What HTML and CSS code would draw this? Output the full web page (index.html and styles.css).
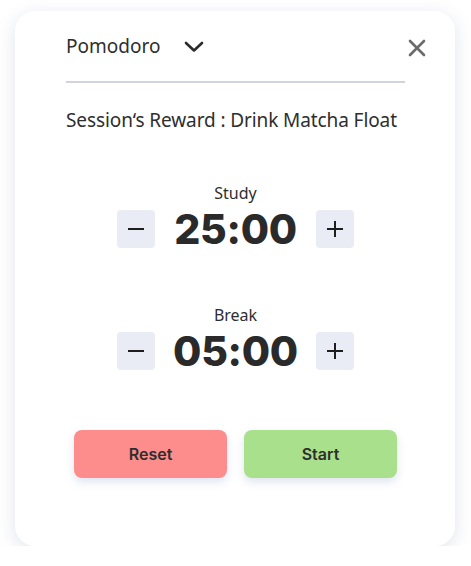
FILE: index.html
```html
<!DOCTYPE html>
<html>
<head>
<meta charset="utf-8">
<link rel="stylesheet" href="styles.css">
</head>
<body>
<div class="card">
  <div class="header">
    <span class="title">Pomodoro</span>
    <svg class="chev" width="20" height="12" viewBox="0 0 20 12"><path d="M2 2 L10 9.5 L18 2" fill="none" stroke="#2b2b2b" stroke-width="2.6" stroke-linecap="round" stroke-linejoin="round"/></svg>
  </div>
  <svg class="close" width="20" height="20" viewBox="0 0 20 20"><path d="M3 3 L17 17 M17 3 L3 17" fill="none" stroke="#6a6a6a" stroke-width="2.6" stroke-linecap="round"/></svg>
  <div class="divider"></div>
  <p class="reward">Session‘s Reward : Drink Matcha Float</p>

  <div class="timer first">
    <div class="label">Study</div>
    <div class="row">
      <div class="step"><span class="minus"></span></div>
      <div class="time">25:00</div>
      <div class="step"><span class="plus"></span></div>
    </div>
  </div>

  <div class="timer">
    <div class="label">Break</div>
    <div class="row">
      <div class="step"><span class="minus"></span></div>
      <div class="time">05:00</div>
      <div class="step"><span class="plus"></span></div>
    </div>
  </div>

  <div class="actions">
    <button class="btn reset">Reset</button>
    <button class="btn start">Start</button>
  </div>
</div>
</body>
</html>
```
FILE: styles.css
```css
* { box-sizing: border-box; }
body {
  margin: 0;
  background: #fff;
  font-family: "Noto Sans", sans-serif;
  color: #2e2e2e;
}
.card {
  position: relative;
  margin: 11px 0 0 15px;
  width: 440px;
  height: 535px;
  border-radius: 20px;
  background: #fff;
  box-shadow: 0 4px 18px rgba(120, 130, 170, 0.22);
  padding: 0 50px 0 51px;
}
.header {
  height: 70px;
  display: flex;
  align-items: center;
  gap: 24px;
}
.title {
  font-size: 19px;
  line-height: 24px;
  color: #2e2e2e;
}
.chev { margin-top: 1px; }
.close {
  position: absolute;
  top: 27px;
  right: 28px;
}
.divider {
  height: 2px;
  background: #d3d3dd;
}
.reward {
  margin: 25px 0 0;
  font-size: 19px;
  line-height: 24px;
  letter-spacing: -0.1px;
}
.timer { margin-top: 56px; text-align: center; }
.timer.first { margin-top: 50px; }
.label {
  font-size: 16px;
  line-height: 22px;
}
.row {
  margin-top: 6px;
  display: flex;
  justify-content: center;
  align-items: center;
}
.step {
  width: 38px;
  height: 38px;
  border-radius: 4px;
  background: #e9ecf4;
  position: relative;
}
.minus, .plus {
  position: absolute;
  left: 11px;
  top: 18px;
  width: 16px;
  height: 2px;
  background: #1e1e1e;
}
.plus::after {
  content: "";
  position: absolute;
  left: 7px;
  top: -7px;
  width: 2px;
  height: 16px;
  background: #1e1e1e;
}
.time {
  width: 161px;
  font-family: Inter, sans-serif;
  font-weight: 800;
  font-size: 41px;
  line-height: 38px;
  color: #2a2a2a;
  letter-spacing: -0.3px;
}
.actions {
  margin-top: 60px;
  display: flex;
  justify-content: center;
  gap: 17px;
}
.btn {
  width: 153px;
  height: 48px;
  border: none;
  border-radius: 8px;
  font-family: Inter, sans-serif;
  font-weight: 600;
  font-size: 16px;
  color: #2e2e2e;
  box-shadow: 0 4px 8px rgba(110, 130, 180, 0.22);
}
.reset { background: #fd8c8c; }
.start { background: #a8e08c; }
```
